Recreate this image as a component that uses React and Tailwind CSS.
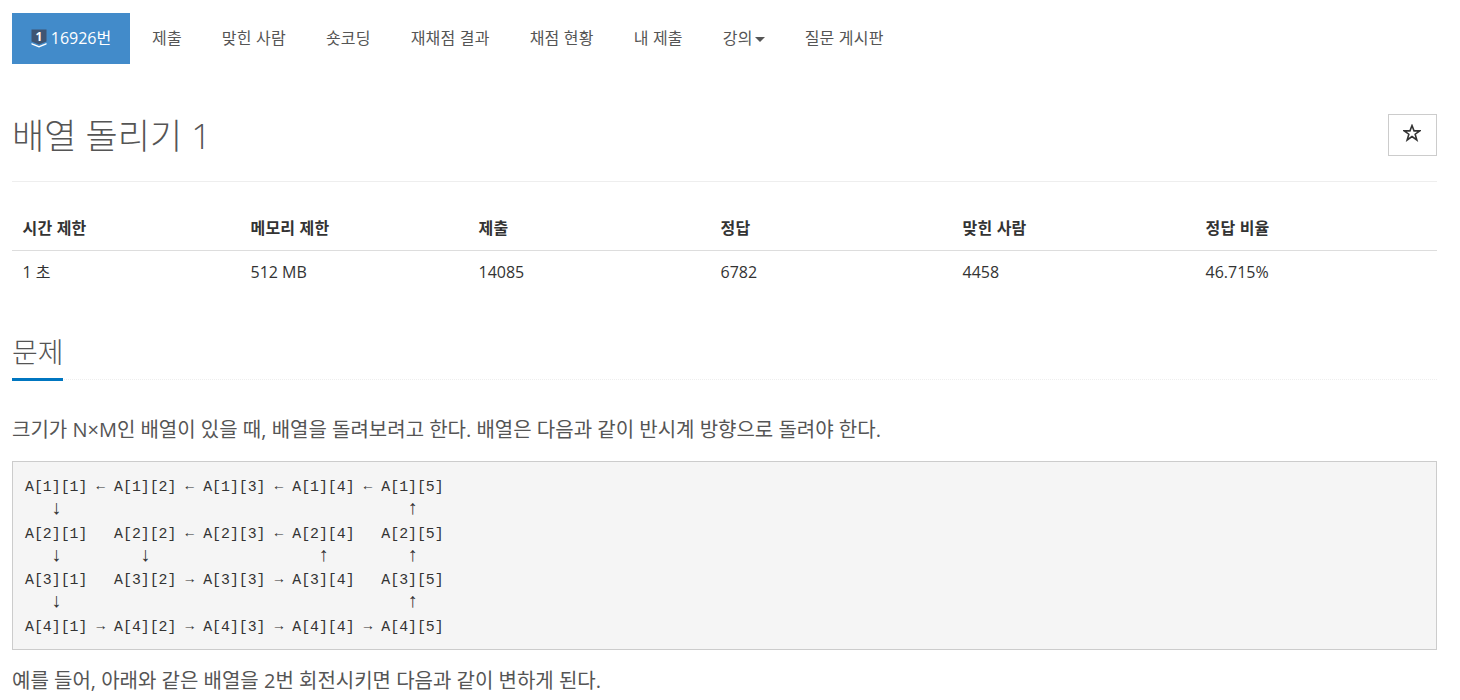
import React from "react";

const FONT = "font-['Open_Sans','Noto_Sans_CJK_KR',sans-serif]";

const nav = ["제출", "맞힌 사람", "숏코딩", "재채점 결과", "채점 현황", "내 제출"];
const heads = ["시간 제한", "메모리 제한", "제출", "정답", "맞힌 사람", "정답 비율"];
const vals = ["1 초", "512 MB", "14085", "6782", "4458", "46.715%"];
const widths = ["w-[228px]", "w-[228px]", "w-[242px]", "w-[242px]", "w-[243px]", "w-[242px]"];

const pre = `A[1][1] ← A[1][2] ← A[1][3] ← A[1][4] ← A[1][5]
   ↓                                       ↑
A[2][1]   A[2][2] ← A[2][3] ← A[2][4]   A[2][5]
   ↓         ↓                   ↑         ↑
A[3][1]   A[3][2] → A[3][3] → A[3][4]   A[3][5]
   ↓                                       ↑
A[4][1] → A[4][2] → A[4][3] → A[4][4] → A[4][5]`;

function PreText() {
  return pre.split(/([←→↑↓])/).map((t, i) => {
    if (t === "↑" || t === "↓") {
      return (
        <span key={i} className="inline-flex w-[8.91px] justify-center text-[20px] leading-[0]">{t}</span>
      );
    }
    if (t === "←" || t === "→") {
      return (
        <span key={i} className="inline-flex w-[8.91px] -translate-y-[1px] justify-center text-[14px] leading-[0]">{t}</span>
      );
    }
    return <span key={i}>{t}</span>;
  });
}

function Tier() {
  return (
    <svg width="16" height="19" viewBox="0 0 16 19" className="block">
      <path d="M0.5 0.5H15.5V12.5L8 15.5L0.5 12.5Z" fill="#3f5573" />
      <path d="M0.5 14L8 17L15.5 14V15.5L8 18.5L0.5 15.5Z" fill="#ffffff" />
      <text x="8" y="12" textAnchor="middle" fontSize="12" fontWeight="700" fill="#fff" fontFamily="Open Sans, sans-serif">1</text>
    </svg>
  );
}

export default function App() {
  return (
    <div className={`${FONT} w-[1460px] h-[700px] overflow-hidden bg-white text-[#555]`}>
      <div className="ml-3 w-[1425px]">
        <nav className="flex pt-[13px] text-[16px] leading-[21px]">
          <a className="flex h-[51px] w-[118px] items-center justify-center gap-[4px] bg-[#428bca] text-[#fff]">
            <Tier />
            <span>16926번</span>
          </a>
          <ul className="flex items-center pl-[2px] tracking-[0.2px]">
            {nav.map((n) => (
              <li key={n} className="px-5 py-[15px]">{n}</li>
            ))}
            <li className="flex items-center gap-[2px] px-5 py-[15px]">
              강의
              <span className="mt-[2px] h-0 w-0 border-x-[5px] border-t-[5px] border-x-transparent border-t-[#555]" />
            </li>
            <li className="px-5 py-[15px]">질문 게시판</li>
          </ul>
        </nav>

        <div className="mt-[50px] flex h-[68px] items-start justify-between border-b border-[#eee]">
          <h1 className="mt-[1px] text-[35px] font-light leading-[42px]">배열 돌리기 1</h1>
          <button className="flex h-[42px] w-[49px] items-center justify-center border border-[#ccc] bg-white pb-[4px] pr-[1px] text-[#333]">
            <svg width="18" height="18" viewBox="0 0 16 16" fill="none" stroke="#333" strokeWidth="1.4" strokeLinejoin="miter">
              <path d="M8 1.4L9.8 6.1H14.9L10.8 9.1L12.3 14.2L8 11.1L3.7 14.2L5.2 9.1L1.1 6.1H6.2Z" />
            </svg>
          </button>
        </div>

        <table className="mt-[24px] w-full table-fixed border-collapse text-[16px] leading-[20px] text-[#333]">
          <thead>
            <tr className="border-b border-[#ddd]">
              {heads.map((h, i) => (
                <th key={h} className={`${widths[i]} h-[44px] px-[10.5px] text-left font-bold tracking-[0.2px]`}>{h}</th>
              ))}
            </tr>
          </thead>
          <tbody>
            <tr>
              {vals.map((v) => (
                <td key={v} className="h-[44px] px-[10.5px] text-left">{v}</td>
              ))}
            </tr>
          </tbody>
        </table>

        <section className="mt-[31px]">
          <div className="relative h-[55px] border-b border-dotted border-[#eee]">
            <h2 className="pt-[7px] text-[28px] font-light leading-[40px]">문제</h2>
            <span className="absolute bottom-[-2px] left-0 h-[3px] w-[51px] bg-[#0076c0]" />
          </div>
          <p className="mt-[36px] text-[20px] leading-[27px]">
            크기가 N×M인 배열이 있을 때, 배열을 돌려보려고 한다. 배열은 다음과 같이 반시계 방향으로 돌려야 한다.
          </p>
          <pre className="mt-[18px] h-[189px] border border-[#ccc] bg-[#f5f5f5] px-3 pt-[14px] font-['Liberation_Mono','DejaVu_Sans_Mono',monospace] text-[14.85px] leading-[23.3px] text-[#333]"><PreText /></pre>
          <p className="mt-[17px] text-[20px] leading-[27px]">
            예를 들어, 아래와 같은 배열을 2번 회전시키면 다음과 같이 변하게 된다.
          </p>
        </section>
      </div>
    </div>
  );
}
